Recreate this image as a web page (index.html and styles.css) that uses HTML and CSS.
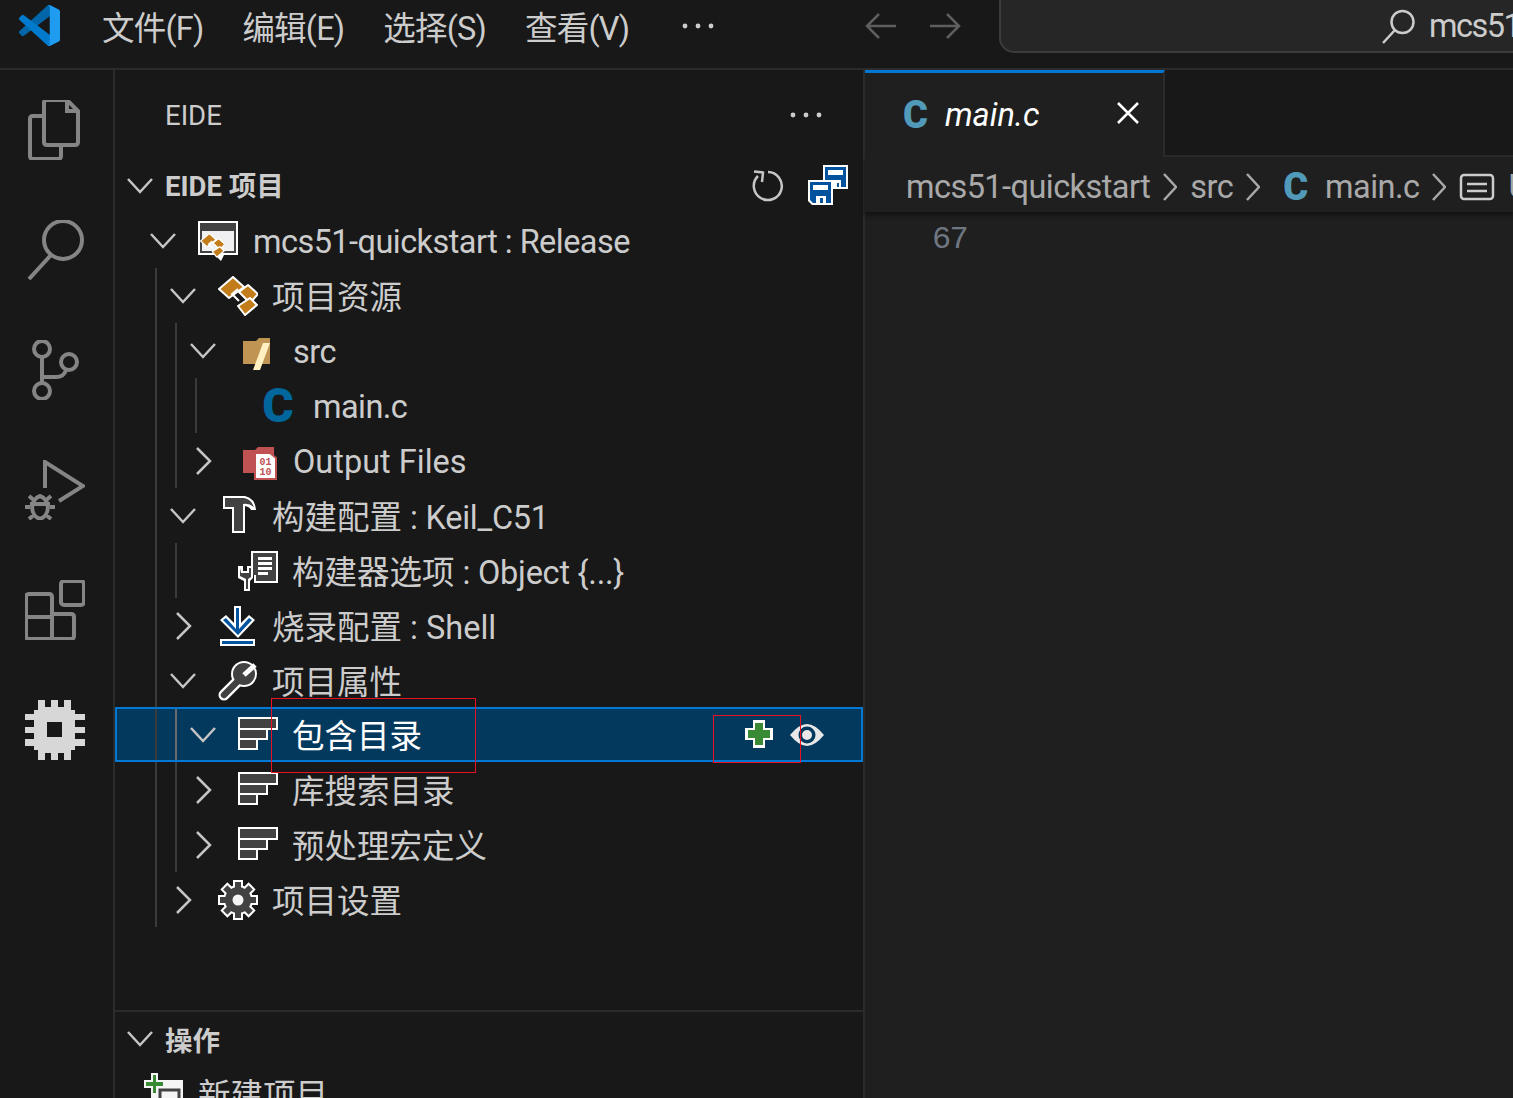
FILE: index.html
```html
<!DOCTYPE html>
<html lang="zh-CN">
<head>
    <meta charset="UTF-8">
    <title>main.c - mcs51-quickstart</title>
    <link rel="stylesheet" href="styles.css">
</head>
<body>
    <svg class="defs" width="0" height="0">
        <symbol id="down" viewBox="0 0 40 40"><path d="M8 13 20 26 32 13" fill="none" stroke="#c5c5c5" stroke-width="2.5"/></symbol>
        <symbol id="right" viewBox="0 0 40 40"><path d="M14 7 27 20 14 33" fill="none" stroke="#c5c5c5" stroke-width="2.5"/></symbol>
        <symbol id="list" viewBox="0 0 40 40">
            <path d="M0 2h40v13H30v10H20v10H0z" fill="#fff"/>
            <path d="M2 4h36v9H2zM2 15h26v8H2zM2 25h16v8H2z" fill="#424242"/>
        </symbol>
        <symbol id="res" viewBox="0 0 40 40">
            <g fill="#c27d1a" stroke="#fff" stroke-width="2" stroke-linejoin="round">
                <path d="M1 13 15 1 26 11 11 22z"/>
                <path d="M21 16 30 9 40 18 32 27z"/>
                <path d="M20 30 32 22 39 29 27 39z"/>
            </g>
            <path d="M20 13 14 18 21 25" fill="none" stroke="#fff" stroke-width="2"/>
        </symbol>
    </svg>

    <div class="shell">
        <header class="titlebar">
            <svg class="logo" viewBox="0 0 100 100" width="41" height="41">
                <path fill="#0065a9" d="M96.46 10.8 75.86.87a6.23 6.23 0 0 0-7.1 1.21L1.3 63.6a4.16 4.16 0 0 0 0 6.15l5.5 5a4.16 4.16 0 0 0 5.32.24L93.4 13.37c2.73-2.07 6.65-.12 6.65 3.3v-.24a6.25 6.25 0 0 0-3.54-5.63z"/>
                <path fill="#007acc" d="M96.46 89.2 75.86 99.13a6.23 6.23 0 0 1-7.1-1.21L1.3 36.4a4.16 4.16 0 0 1 0-6.15l5.5-5a4.16 4.16 0 0 1 5.32-.24L93.4 86.63c2.73 2.07 6.65.12 6.65-3.3v.24a6.25 6.25 0 0 1-3.54 5.63z"/>
                <path fill="#1f9cf0" d="M75.86 99.13a6.23 6.23 0 0 1-7.1-1.2c2.3 2.3 6.24.67 6.24-2.58V4.65c0-3.25-3.94-4.87-6.24-2.57a6.23 6.23 0 0 1 7.1-1.21l20.6 9.9A6.25 6.25 0 0 1 100 16.4v67.2a6.25 6.25 0 0 1-3.54 5.63z"/>
            </svg>
            <nav class="menu">
                <span>文件(F)</span>
                <span>编辑(E)</span>
                <span>选择(S)</span>
                <span>查看(V)</span>
                <svg class="more" width="32" height="8" viewBox="0 0 32 8"><circle cx="3" cy="4" r="2.4"/><circle cx="16" cy="4" r="2.4"/><circle cx="29" cy="4" r="2.4"/></svg>
            </nav>
            <div class="arrows">
                <svg width="34" height="30" viewBox="0 0 34 30"><path d="M32 15H3M15 3 3 15 15 27" fill="none" stroke="#5e5e5e" stroke-width="2.5"/></svg>
                <svg width="34" height="30" viewBox="0 0 34 30"><path d="M2 15H31M19 3 31 15 19 27" fill="none" stroke="#5e5e5e" stroke-width="2.5"/></svg>
            </div>
            <div class="search">
                <svg width="36" height="36" viewBox="0 0 36 36"><circle cx="21.5" cy="14" r="11" fill="none" stroke="#ccc" stroke-width="2.5"/><path d="M14 22 2 35" stroke="#ccc" stroke-width="2.5"/></svg>
                <span>mcs51</span>
            </div>
        </header>

        <div class="body">
            <aside class="activity">
                <div class="act">
                    <svg width="60" height="60" viewBox="0 0 60 60" class="act-line">
                        <path d="M22 0h20l11 11v31q0 3-3 3H22q-3 0-3-3V3q0-3 3-3zM42 1v10h10"/>
                        <path d="M19 16H8q-3 0-3 3v37q0 3 3 3h25q3 0 3-3V45"/>
                    </svg>
                </div>
                <div class="act">
                    <svg width="60" height="60" viewBox="0 0 60 60" class="act-line">
                        <circle cx="38" cy="20" r="19"/>
                        <path d="M26 35 4 59"/>
                    </svg>
                </div>
                <div class="act">
                    <svg width="60" height="60" viewBox="0 0 60 60" class="act-line">
                        <circle cx="17" cy="9" r="8"/>
                        <circle cx="17" cy="51" r="8"/>
                        <circle cx="44" cy="22" r="8"/>
                        <path d="M17 17v26M41 30q-2 7-10 7H17"/>
                    </svg>
                </div>
                <div class="act">
                    <svg width="60" height="60" viewBox="0 0 60 60" class="act-line">
                        <path d="M20 28V2L58 26 34 41"/>
                        <path d="M15 36a11 12 0 0 1 0 23 11 12 0 0 1 0-23zM4 36l6 5M26 36l-6 5M0 47h5M25 47h5M4 59l6-5M26 59l-6-5M5 44h20"/>
                    </svg>
                </div>
                <div class="act">
                    <svg width="60" height="60" viewBox="0 0 60 60" class="act-line">
                        <rect x="36" y="1" width="23" height="24" rx="3"/>
                        <path d="M27 34h19q3 0 3 3v19q0 3-3 3H4q-3 0-3-3V17q0-3 3-3h20q3 0 3 3v42M1 37h26"/>
                    </svg>
                </div>
                <div class="act">
                    <svg width="60" height="60" viewBox="0 0 60 60">
                        <path fill="#d7d7d7" fill-rule="evenodd" d="M13 0h7v7h6V0h7v7h6V0h7v10h4v4h10v6H50v7h10v6H50v6h10v7H50v4h-4v10h-7v-7h-6v7h-7v-7h-6v7h-7V50H9v-4H0v-7h9v-6H0v-6h9v-7H0v-6h9v-4h4zM22 22v15h15V22z"/>
                    </svg>
                </div>
            </aside>

            <section class="sidebar">
                <div class="pane-top">
                    <div class="side-title">
                        <span>EIDE</span>
                        <svg class="more" width="32" height="8" viewBox="0 0 32 8"><circle cx="3" cy="4" r="2.4"/><circle cx="16" cy="4" r="2.4"/><circle cx="29" cy="4" r="2.4"/></svg>
                    </div>
                    <div class="sec-head">
                        <svg class="chev" width="40" height="40"><use href="#down"/></svg>
                        <span class="cn-head">EIDE 项目</span>
                        <div class="sec-actions">
                            <svg width="40" height="40" viewBox="0 0 40 40"><path d="M20 6A14 14 0 1 1 10 10" fill="none" stroke="#c5c5c5" stroke-width="2.5"/><path d="M6 5.5 15 6.5 14 16" fill="none" stroke="#c5c5c5" stroke-width="2.5"/></svg>
                            <svg width="42" height="42" viewBox="0 0 42 42">
                                <path d="M15 0h25v24H15z" fill="#fff"/>
                                <path d="M17 2h21v20H17z" fill="#00539c"/>
                                <path d="M20 5h15v5H20zM23 15h10v7H23z" fill="#fff"/>
                                <path d="M29 18h2v4h-2z" fill="#00539c"/>
                                <path d="M0 15h25v25H4l-4-4z" fill="#fff"/>
                                <path d="M2 17h21v21H5l-3-3z" fill="#00539c"/>
                                <path d="M5 20h15v5H5zM8 31h10v7H8z" fill="#fff"/>
                                <path d="M12 33h3v5h-3z" fill="#00539c"/>
                            </svg>
                        </div>
                    </div>

                    <div class="row">
                        <svg class="chev" width="40" height="40"><use href="#down"/></svg>
                        <svg class="ico" width="40" height="40" viewBox="0 0 40 40">
                            <path d="M0 0h40v34H26l-3 6-6-6H0z" fill="#fff"/>
                            <path d="M2 2h36v30H2z" fill="#424242"/>
                            <path d="M4 10h32v20H4z" fill="#f0eff1"/>
                            <g transform="translate(2 12) scale(.62)"><use href="#res" width="40" height="40"/></g>
                        </svg>
                        <span class="label en lat">mcs51-quickstart : Release</span>
                    </div>
                    <div class="row">
                        <i class="guide"></i>
                        <svg class="chev" width="40" height="40"><use href="#down"/></svg>
                        <svg class="ico" width="40" height="40"><use href="#res"/></svg>
                        <span class="label cn">项目资源</span>
                    </div>
                    <div class="row">
                        <i class="guide"></i><i class="guide"></i>
                        <svg class="chev" width="40" height="40"><use href="#down"/></svg>
                        <svg class="ico" width="40" height="40" viewBox="0 0 40 40">
                            <path d="M5 10h13l3-3h11v26H5z" fill="#c09553"/>
                            <path d="M25 12h7L22 39h-7z" fill="#fff1c2"/>
                        </svg>
                        <span class="label en lat">src</span>
                    </div>
                    <div class="row">
                        <i class="guide"></i><i class="guide"></i><i class="guide"></i>
                        <span class="chev"></span>
                        <span class="ico c-big">C</span>
                        <span class="label en lat">main.c</span>
                    </div>
                    <div class="row">
                        <i class="guide"></i><i class="guide"></i>
                        <svg class="chev" width="40" height="40"><use href="#right"/></svg>
                        <svg class="ico" width="40" height="40" viewBox="0 0 40 40">
                            <path d="M5 9h12l3-3h16v26H5z" fill="#c15253"/>
                            <path d="M17 12h15l6 5v21H17z" fill="#fff" stroke="#c15253" stroke-width="2"/>
                            <text class="bits" x="27.5" y="24">01</text>
                            <text class="bits" x="27.5" y="34">10</text>
                        </svg>
                        <span class="label en">Output Files</span>
                    </div>
                    <div class="row">
                        <i class="guide"></i>
                        <svg class="chev" width="40" height="40"><use href="#down"/></svg>
                        <svg class="ico" width="40" height="40" viewBox="0 0 40 40">
                            <path d="M5 0H27Q37 2 38 14H33Q32 11 27 10V37H14V13H5z" fill="#fff"/>
                            <path d="M7 2H26Q33 3 36 11 31 7 25 8V35H16V11H7z" fill="#424242"/>
                        </svg>
                        <span class="label cn">构建配置 <span class="lat-s">: Keil_C51</span></span>
                    </div>
                    <div class="row">
                        <i class="guide"></i><i class="guide"></i>
                        <span class="chev"></span>
                        <svg class="ico" width="40" height="40" viewBox="0 0 40 40">
                            <path d="M13 0h27v32H16v-8H13z" fill="#fff"/>
                            <path d="M15 2h23v28H18V24h-3z" fill="#424242"/>
                            <path d="M20 6h14v3H20zM20 11h14v3H20zM20 16h14v3H20zM20 21h10v3H20z" fill="#fff"/>
                            <path d="M0 15h5v5h4v-5h6v12l-3 3v10H6V30l-6-3z" fill="#fff"/>
                            <path d="M2 17v8l6 3v10h2V28l3-2v-9h-2v5H3z" fill="#424242"/>
                        </svg>
                        <span class="label cn">构建器选项 <span class="lat-s">: Object {...}</span></span>
                    </div>
                    <div class="row">
                        <i class="guide"></i>
                        <svg class="chev" width="40" height="40"><use href="#right"/></svg>
                        <svg class="ico" width="40" height="40" viewBox="0 0 40 40">
                            <path d="M16 0h7v17l8-8 6 5-17 18L2 14l6-5 8 8zM2 33h35v7H2z" fill="#fff"/>
                            <path d="M18 2h3v21l10-11 3 2-14 15L5 14l3-2 10 11zM4 35h31v3H4z" fill="#00539c"/>
                        </svg>
                        <span class="label cn">烧录配置 : Shell</span>
                    </div>
                    <div class="row">
                        <i class="guide"></i>
                        <svg class="chev" width="40" height="40"><use href="#down"/></svg>
                        <svg class="ico" width="40" height="40" viewBox="0 0 40 40">
                            <path d="M6 34 20 20" stroke="#fff" stroke-width="11" stroke-linecap="round"/>
                            <circle cx="26" cy="13" r="13" fill="#fff"/>
                            <path d="M6 34 20 20" stroke="#424242" stroke-width="6.5" stroke-linecap="round"/>
                            <circle cx="26" cy="13" r="11" fill="#424242"/>
                            <path d="M26 14 37 4" stroke="#fff" stroke-width="5"/>
                        </svg>
                        <span class="label cn">项目属性</span>
                    </div>
                    <div class="row selected">
                        <i class="guide"></i><i class="guide"></i>
                        <svg class="chev" width="40" height="40"><use href="#down"/></svg>
                        <svg class="ico" width="40" height="40"><use href="#list"/></svg>
                        <span class="label cn">包含目录</span>
                        <div class="row-actions">
                            <svg width="40" height="40" viewBox="0 0 40 40">
                                <path d="M14 5h12v8h8v12h-8v8H14v-8H6V13h8z" fill="#fff"/>
                                <path d="M16 8h8v7h7v8h-7v7h-8v-7H9v-8h7z" fill="#388a34"/>
                            </svg>
                            <svg width="40" height="40" viewBox="0 0 40 40">
                                <path d="M3 20Q12 9 20 9t17 11Q28 31 20 31T3 20z" fill="#e8e8e8"/>
                                <circle cx="20" cy="20" r="8.5" fill="#04395e"/>
                                <circle cx="20" cy="20" r="5" fill="#e8e8e8"/>
                            </svg>
                        </div>
                    </div>
                    <div class="row">
                        <i class="guide"></i><i class="guide"></i>
                        <svg class="chev" width="40" height="40"><use href="#right"/></svg>
                        <svg class="ico" width="40" height="40"><use href="#list"/></svg>
                        <span class="label cn">库搜索目录</span>
                    </div>
                    <div class="row">
                        <i class="guide"></i><i class="guide"></i>
                        <svg class="chev" width="40" height="40"><use href="#right"/></svg>
                        <svg class="ico" width="40" height="40"><use href="#list"/></svg>
                        <span class="label cn">预处理宏定义</span>
                    </div>
                    <div class="row">
                        <i class="guide"></i>
                        <svg class="chev" width="40" height="40"><use href="#right"/></svg>
                        <svg class="ico" width="40" height="40" viewBox="-20 -20 40 40">
                            <g fill="#fff">
                                <circle r="15"/>
                                <rect x="-5" y="-20" width="10" height="40"/>
                                <rect x="-5" y="-20" width="10" height="40" transform="rotate(45)"/>
                                <rect x="-5" y="-20" width="10" height="40" transform="rotate(90)"/>
                                <rect x="-5" y="-20" width="10" height="40" transform="rotate(135)"/>
                            </g>
                            <g fill="#424242">
                                <circle r="13"/>
                                <rect x="-3" y="-18" width="6" height="36"/>
                                <rect x="-3" y="-18" width="6" height="36" transform="rotate(45)"/>
                                <rect x="-3" y="-18" width="6" height="36" transform="rotate(90)"/>
                                <rect x="-3" y="-18" width="6" height="36" transform="rotate(135)"/>
                            </g>
                            <circle r="5.5" fill="#f5f5f5"/>
                        </svg>
                        <span class="label cn">项目设置</span>
                    </div>
                </div>

                <div class="pane-bottom">
                    <div class="sec-head">
                        <svg class="chev" width="40" height="40"><use href="#down"/></svg>
                        <span>操作</span>
                    </div>
                    <div class="row op">
                        <svg class="ico" width="40" height="40" viewBox="0 0 40 40">
                            <path d="M8 0h7v7h25v33H8V15H1V7h7z" fill="#f5f5f5"/>
                            <path d="M10 2h3v7h7v4h-7v7h-3v-7H3V9h7z" fill="#388a34"/>
                            <path d="M17 17h19v17H17z" fill="none" stroke="#424242" stroke-width="3"/>
                        </svg>
                        <span class="label">新建项目</span>
                    </div>
                </div>
            </section>

            <main class="editor">
                <div class="tabs">
                    <div class="tab">
                        <span class="c-small">C</span>
                        <span class="tab-name">main.c</span>
                        <svg class="tab-close" width="26" height="26" viewBox="0 0 26 26"><path d="M3 3 23 23M23 3 3 23" stroke="#fff" stroke-width="2.5"/></svg>
                    </div>
                </div>
                <div class="crumbs">
                    <span class="lat">mcs51-quickstart</span>
                    <svg width="14" height="30" viewBox="0 0 14 30"><path d="M1 2 13 15 1 28" fill="none" stroke="#a9a9a9" stroke-width="2.5"/></svg>
                    <span class="lat">src</span>
                    <svg width="14" height="30" viewBox="0 0 14 30"><path d="M1 2 13 15 1 28" fill="none" stroke="#a9a9a9" stroke-width="2.5"/></svg>
                    <span class="c-small crumb-c">C</span>
                    <span class="lat">main.c</span>
                    <svg width="14" height="30" viewBox="0 0 14 30"><path d="M1 2 13 15 1 28" fill="none" stroke="#a9a9a9" stroke-width="2.5"/></svg>
                    <svg width="36" height="28" viewBox="0 0 36 28"><rect x="2" y="2" width="32" height="24" rx="3" fill="none" stroke="#ccc" stroke-width="2.5"/><path d="M8 11h20M8 18h20" stroke="#ccc" stroke-width="2.5"/></svg>
                    <span>USER</span>
                </div>
                <div class="code">
                    <span class="line-no">67</span>
                </div>
            </main>
        </div>

        <div class="mark mark-title"></div>
        <div class="mark mark-action"></div>
    </div>
</body>
</html>
```

FILE: styles.css
```css
* {
    box-sizing: border-box;
}
html,
body {
    margin: 0;
    height: 100%;
    overflow: hidden;
}
body {
    background: #181818;
    color: #ccc;
    font-family: Roboto, "Noto Sans CJK SC", sans-serif;
    font-size: 32.5px;
}
svg {
    display: block;
    flex: none;
}
.defs {
    position: absolute;
}
.shell {
    position: relative;
    width: 1513px;
    height: 1098px;
    overflow: hidden;
}
.lat {
    letter-spacing: -.55px;
}
.lat-s {
    letter-spacing: -.25px;
}

/* 标题栏 */
.titlebar {
    display: flex;
    align-items: center;
    height: 70px;
    padding: 0 0 17px 19px;
    border-bottom: 2px solid #2b2b2b;
    overflow: hidden;
}
.logo {
    margin-right: 42px;
}
.menu {
    display: flex;
    align-items: center;
    gap: 39px;
    width: 660px;
    flex: none;
    letter-spacing: -.8px;
}
.more {
    fill: #ccc;
}
.menu .more {
    margin-left: 14px;
}
.arrows {
    display: flex;
    gap: 30px;
    margin-left: 102px;
}
.search {
    display: flex;
    align-items: center;
    flex: none;
    align-self: flex-end;
    width: 800px;
    height: 70px;
    margin: 0 0 -2px 37px;
    padding: 16px 0 0 380px;
    gap: 12px;
    border: 2px solid #3c3c3c;
    border-radius: 15px;
    background: #262626;
    letter-spacing: -1.5px;
    white-space: nowrap;
}
.body {
    display: flex;
    height: 1028px;
}

/* 左侧活动栏 */
.activity {
    flex: none;
    width: 115px;
    padding-right: 3px;
    border-right: 2px solid #2b2b2b;
}
.act {
    display: flex;
    align-items: center;
    justify-content: center;
    height: 120px;
}
.act-line {
    fill: none;
    stroke: #858585;
    stroke-width: 4;
}

/* 侧边栏 */
.sidebar {
    flex: none;
    width: 750px;
    border-right: 2px solid #2b2b2b;
}
.pane-top {
    height: 942px;
    border-bottom: 2px solid #2b2b2b;
}
.side-title {
    display: flex;
    align-items: center;
    justify-content: space-between;
    height: 88px;
    padding: 2px 41px 0 50px;
    font-size: 27.5px;
}
.sec-head {
    display: flex;
    align-items: center;
    height: 55px;
    padding-left: 5px;
    font-size: 27.5px;
    font-weight: 700;
}
.pane-bottom .sec-head {
    height: 53px;
}
.sec-head .chev {
    margin-right: 5px;
}
.cn-head {
    margin-top: -4px;
}
.sec-actions {
    display: flex;
    align-items: center;
    gap: 20px;
    margin-left: auto;
    padding-right: 13px;
}
.row {
    display: flex;
    align-items: center;
    height: 55px;
    padding-left: 28px;
    white-space: nowrap;
}
.guide {
    flex: none;
    width: 20px;
    height: 100%;
    background: linear-gradient(#3a3a3a, #3a3a3a) 12px 0 / 2px 100% no-repeat;
}
.chev {
    flex: none;
    width: 40px;
}
.ico {
    flex: none;
    width: 40px;
    margin: 0 14px 0 15px;
}
.label.cn {
    margin-top: -3px;
}
.label.en {
    margin: 2px 0 0 1px;
}
.bits {
    fill: #c15253;
    font-family: "Liberation Mono", monospace;
    font-size: 10px;
    font-weight: 700;
    text-anchor: middle;
}
.c-big {
    color: #00669c;
    font-family: Roboto, sans-serif;
    font-size: 48px;
    font-weight: 900;
    line-height: 40px;
    text-align: center;
}
.selected {
    margin-top: -1px;
    background: #04395e;
    outline: 2px solid #0078d4;
    outline-offset: -2px;
    color: #fff;
}
.selected .guide:nth-child(2) {
    background-image: linear-gradient(#6a6a6a, #6a6a6a);
}
.row-actions {
    display: flex;
    gap: 8px;
    margin-left: auto;
    padding-right: 36px;
}
.op {
    padding-left: 28px;
}
.op .ico {
    margin: 0 15px 0 0;
}

/* 编辑区 */
.editor {
    flex: 1;
    min-width: 0;
    background: #1f1f1f;
}
.tabs {
    display: flex;
    height: 87px;
    background: #181818;
    border-bottom: 2px solid #2b2b2b;
}
.tab {
    display: flex;
    align-items: center;
    width: 300px;
    height: 87px;
    padding: 0 22px 0 38px;
    border-top: 3px solid #0078d4;
    border-right: 2px solid #2b2b2b;
    background: #1f1f1f;
}
.tab-close {
    margin: 0 0 4px auto;
}
.c-small {
    color: #519aba;
    font-family: Roboto, sans-serif;
    font-size: 38px;
    font-weight: 900;
}
.tab-name {
    margin-left: 17px;
    color: #fff;
    font-style: italic;
}
.crumbs {
    display: flex;
    align-items: center;
    height: 55px;
    padding: 4px 0 0 41px;
    gap: 13px;
    color: #a9a9a9;
    white-space: nowrap;
    box-shadow: 0 3px 4px #111;
}
.crumb-c {
    margin: 0 4px 0 10px;
}
.code {
    display: flex;
    align-items: center;
    height: 54px;
    padding-left: 67px;
}
.line-no {
    color: #6e7681;
    font-family: "Liberation Mono", monospace;
    font-size: 32px;
    letter-spacing: -1.8px;
}

/* 截图上的红框标注 */
.mark {
    position: absolute;
    border: 1px solid #e81123;
}
.mark-title {
    left: 271px;
    top: 698px;
    width: 205px;
    height: 75px;
}
.mark-action {
    left: 713px;
    top: 715px;
    width: 88px;
    height: 48px;
}
```
